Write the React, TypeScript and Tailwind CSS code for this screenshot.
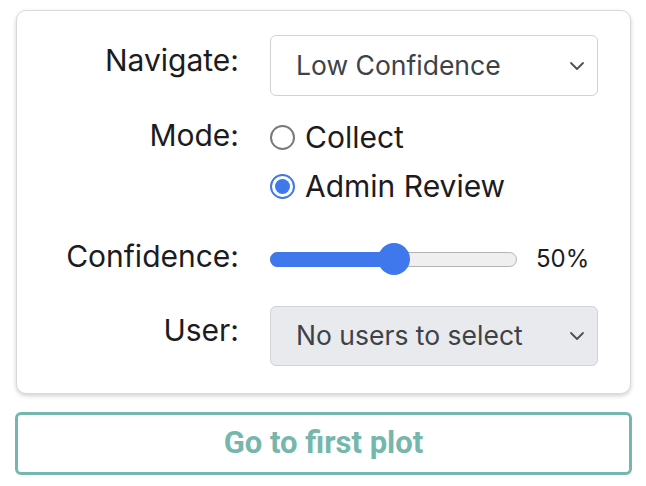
import React, { useState } from 'react'

const labelCls =
    'w-[222px] shrink-0 text-right text-[30px] leading-[36px] text-[#1c1c1e]'

function Chevron() {
    return (
        <svg width="16" height="10" viewBox="0 0 16 10" fill="none" className="shrink-0">
            <path d="M2 2l6 6 6-6" stroke="#4b5058" strokeWidth="1.8" strokeLinecap="round" strokeLinejoin="round" />
        </svg>
    )
}

function Radio({ checked }: { checked: boolean }) {
    if (checked) {
        return (
            <span className="flex h-[25px] w-[25px] shrink-0 items-center justify-center rounded-full border-[2px] border-[#3f78ec] bg-white">
                <span className="h-[15px] w-[15px] rounded-full bg-[#3f78ec]" />
            </span>
        )
    }
    return <span className="h-[25px] w-[25px] shrink-0 rounded-full border-[2px] border-[#7a7a7a] bg-white" />
}

export default function App() {
    const [mode, setMode] = useState<'collect' | 'admin'>('admin')
    const confidence = 50

    return (
        <div className="min-h-[486px] w-[646px] bg-white pt-[10px] font-['Inter',sans-serif]">
            <div className="ml-[16px] h-[384px] w-[615px] rounded-[10px] border border-[#d9d9d9] bg-white pt-[24px] shadow-[0_2px_4px_rgba(0,0,0,0.18)]">
                {/* Navigate */}
                <div className="flex items-start gap-[31px]">
                    <div className={labelCls + ' pt-[7px]'}>Navigate:</div>
                    <div className="flex h-[61px] w-[328px] items-center justify-between rounded-[6px] border-[1.5px] border-[#cfd2d6] bg-white pl-[25px] pr-[12px] text-[26.5px] text-[#3d4248]">
                        <span>Low Confidence</span>
                        <Chevron />
                    </div>
                </div>

                {/* Mode */}
                <div className="mt-[17px] flex items-start gap-[31px]">
                    <div className={labelCls + ' pt-[4px]'}>Mode:</div>
                    <div className="flex flex-col">
                        <button
                            className="flex h-[49px] items-center gap-[10px] text-[30px] text-[#1c1c1e]"
                            onClick={() => setMode('collect')}
                        >
                            <Radio checked={mode === 'collect'} />
                            <span>Collect</span>
                        </button>
                        <button
                            className="flex h-[49px] items-center gap-[10px] text-[30px] text-[#1c1c1e]"
                            onClick={() => setMode('admin')}
                        >
                            <Radio checked={mode === 'admin'} />
                            <span>Admin Review</span>
                        </button>
                    </div>
                </div>

                {/* Confidence */}
                <div className="mt-[26px] flex items-start gap-[31px]">
                    <div className={labelCls + ' pt-[1px]'}>Confidence:</div>
                    <div className="flex h-[44px] items-center">
                        <div className="relative h-[15px] w-[247px] rounded-full border border-[#b3b3b3] bg-[#efefef]">
                            <div
                                className="absolute -left-px -top-px h-[15px] rounded-l-full bg-[#3f78ec]"
                                style={{ width: `${(247 - 32) * (confidence / 100) + 16}px` }}
                            />
                            <div
                                className="absolute top-[-9.5px] h-[32px] w-[32px] rounded-full bg-[#3f78ec]"
                                style={{ left: `${(247 - 32) * (confidence / 100) - 1}px` }}
                            />
                        </div>
                        <span className="ml-[19px] text-[24px] text-[#1c1c1e]">{confidence}%</span>
                    </div>
                </div>

                {/* User */}
                <div className="mt-[25px] flex items-start gap-[31px]">
                    <div className={labelCls + ' pt-[6px]'}>User:</div>
                    <div className="flex h-[60px] w-[328px] items-center justify-between rounded-[6px] border-[1.5px] border-[#cfd2d6] bg-[#e9eaee] pl-[25px] pr-[12px] text-[26.5px] text-[#3d4248]">
                        <span>No users to select</span>
                        <Chevron />
                    </div>
                </div>
            </div>

            <button className="ml-[15px] mt-[18px] flex h-[63px] w-[617px] items-center justify-center rounded-[6px] border-[3px] border-[#76b7ad] bg-white font-['Roboto',sans-serif] text-[31px] font-bold text-[#76b7ad]">
                Go to first plot
            </button>
        </div>
    )
}
